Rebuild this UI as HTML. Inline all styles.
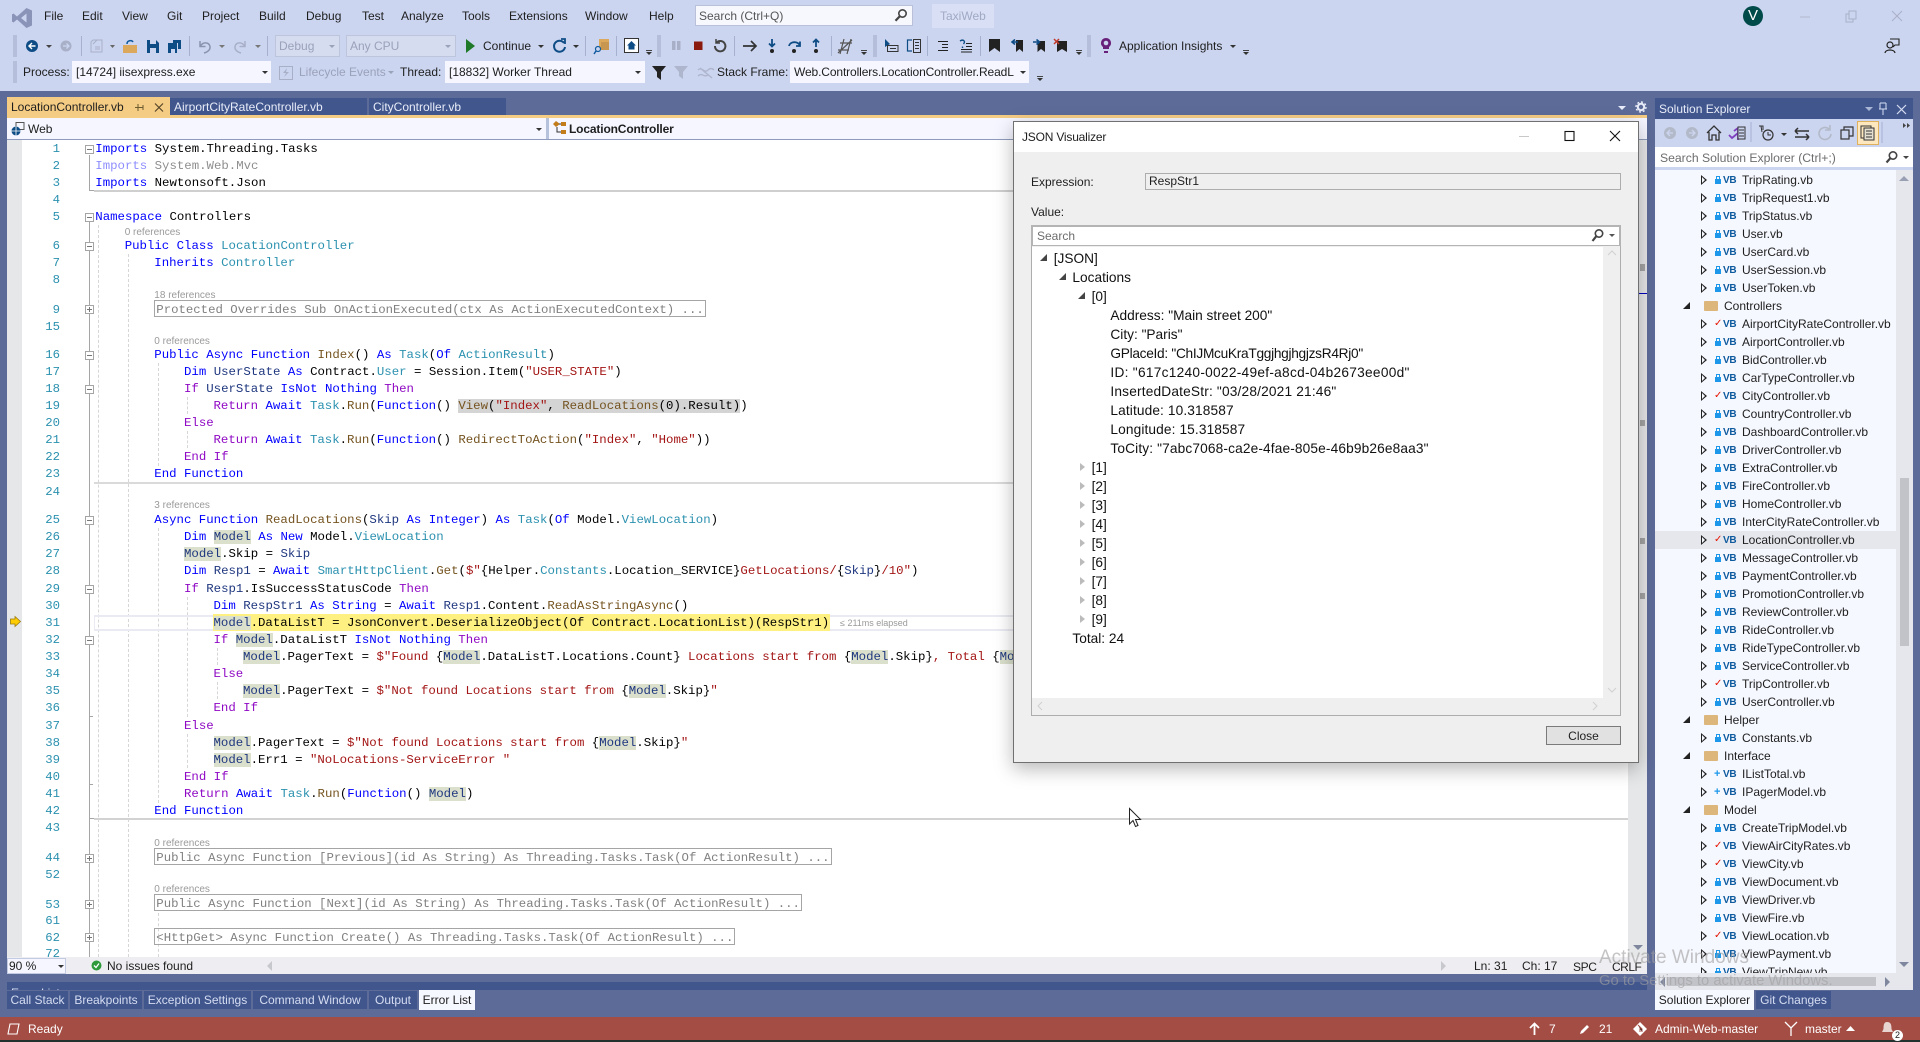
<!DOCTYPE html>
<html><head><meta charset="utf-8"><style>
html,body{margin:0;padding:0;width:1920px;height:1042px;overflow:hidden;background:#5D6B99}
body{font:12px/16px "Liberation Sans",sans-serif;color:#1e1e1e;position:relative}
div,span.a,svg{position:absolute}
svg{overflow:visible}
.u{white-space:nowrap}
.r{position:absolute;left:0;top:1px;width:1920px;height:1041px}
.l{position:absolute;white-space:pre;font:12.37px/17px "Liberation Mono",monospace;color:#000;height:17px}
.n{position:absolute;left:20px;width:40px;text-align:right;font:12.33px/17px "Liberation Mono",monospace;color:#2B91AF}
.k{color:#00f}.c{color:#8F08C4}.t{color:#2B91AF}.s{color:#A31515}.v{color:#1F377F}.m{color:#74531F}
.h{background:#DBE0CC}.g{background:#D4D4D4}
.cl{position:absolute;font:10px/12px "Liberation Sans",sans-serif;color:#9a9a9a;white-space:nowrap}
.box{position:absolute;border:1px solid #A5A5A5;color:#808080;font:12.33px/18px "Liberation Mono",monospace;height:15px;margin-top:-1px;white-space:pre;padding:0 1px;box-sizing:content-box}
.fb{position:absolute;left:85px;width:7px;height:7px;margin-top:1px;border:1px solid #A5A5A5;background:#fff}
.fb:after{content:"";position:absolute;left:1px;top:3px;width:5px;height:1px;background:#777}
.fp:before{content:"";position:absolute;left:3px;top:1px;width:1px;height:5px;background:#777}
.dg{position:absolute;width:0;border-left:1px dashed #d6d6d6}
.mn{position:absolute;top:8px;white-space:nowrap}
.cb{position:absolute;background:#F5F6FF;height:22px;line-height:22px;white-space:nowrap;box-sizing:border-box;padding-left:4px}
.tb{position:absolute;top:991px;height:18px;line-height:18px;background:#40568D;color:#D6DDF2;text-align:center;white-space:nowrap}
.e{position:absolute;height:18px;line-height:18px;white-space:nowrap}
.vb{position:absolute;left:1723px;margin-top:1px;font:bold 10px/18px "Liberation Sans",sans-serif;color:#0E5A9E;letter-spacing:-.3px}
.ar{position:absolute;left:1701px;width:0;height:0;border-left:6px solid #222;border-top:5px solid transparent;border-bottom:5px solid transparent}
.ar:after{content:"";position:absolute;left:-5px;top:-3px;width:0;height:0;border-left:3.5px solid #F6F8FF;border-top:3px solid transparent;border-bottom:3px solid transparent}
.ex{position:absolute;left:1683px;width:0;height:0;border-bottom:7px solid #222;border-left:7px solid transparent}
.lk{position:absolute;left:1715px;width:6px;height:5px;margin-top:-4px;background:#1C97EA}
.lk:before{content:"";position:absolute;left:1px;top:-3px;width:2px;height:2px;border:1px solid #1C97EA;border-bottom:none}
.ck{position:absolute;left:1714px;color:#E51400;font:bold 10px/18px "DejaVu Sans",sans-serif}
.pl{position:absolute;left:1714px;color:#1C97EA;font:bold 11px/18px "Liberation Sans",sans-serif}
.fo{position:absolute;left:1704px;width:14px;height:10px;background:#DCB67A;border-radius:1px}
.j{position:absolute;white-space:nowrap;font:13.7px/19px "Liberation Sans",sans-serif;color:#111;height:19px}
.ja{position:absolute;left:1080px;width:0;height:0;border-left:5px solid #bbb;border-top:4px solid transparent;border-bottom:4px solid transparent}
.jb{position:absolute;width:0;height:0;border-bottom:7px solid #444;border-left:7px solid transparent}
.sp{position:absolute;width:1px;height:20px;background:#A6B0CF;top:36px}
.gr{position:absolute;width:4px;height:22px;background-image:radial-gradient(#7f88a5 .7px,transparent .8px);background-size:2px 2px}
.dd{position:absolute;width:0;height:0;border-top:3px solid #333;border-left:3px solid transparent;border-right:3px solid transparent}
.dc{position:absolute;width:6px;height:1px;background:#444}
</style></head><body>

<!-- top chrome -->
<div style="left:0;top:0;width:1920px;height:91px;background:#CCD5F0"></div>
<svg style="left:11px;top:7px" width="22" height="22" viewBox="0 0 22 22"><path d="M15.5 1L21 3.5V18.5L15.5 21L6 12.5L2.5 15.5L1 14.6V7.4L2.5 6.5L6 9.5ZM15.5 6.5L10 11L15.5 15.5Z" fill="#8A93B8" fill-rule="evenodd"/></svg>
<span class="mn" style="left:44px">File</span><span class="mn" style="left:82px">Edit</span><span class="mn" style="left:122px">View</span><span class="mn" style="left:167px">Git</span><span class="mn" style="left:202px">Project</span><span class="mn" style="left:259px">Build</span><span class="mn" style="left:306px">Debug</span><span class="mn" style="left:362px">Test</span><span class="mn" style="left:401px">Analyze</span><span class="mn" style="left:462px">Tools</span><span class="mn" style="left:509px">Extensions</span><span class="mn" style="left:585px">Window</span><span class="mn" style="left:649px">Help</span>
<div style="left:695px;top:5px;width:218px;height:21px;background:#F7F8FE;border:1px solid #B8C0DA;box-sizing:border-box"></div>
<span class="mn" style="left:699px;color:#555">Search (Ctrl+Q)</span>
<svg style="left:894px;top:8px" width="14" height="14" viewBox="0 0 14 14"><circle cx="8.5" cy="5.5" r="3.7" fill="none" stroke="#444" stroke-width="1.6"/><path d="M5.8 8.2L1.5 12.8" stroke="#444" stroke-width="2.2"/></svg>
<div style="left:932px;top:4px;width:62px;height:24px;background:#D9E0F5"></div>
<span class="mn" style="left:940px;color:#A0A9C4">TaxiWeb</span>
<div style="left:1743px;top:6px;width:20px;height:20px;border-radius:50%;background:#004A4A;color:#fff;text-align:center;font-size:15px;line-height:20px">V</div>
<svg style="left:1795px;top:8px" width="110" height="18"><path d="M5 9H15" stroke="#B2B9CE" stroke-width="1"/><rect x="51" y="6" width="7" height="8" fill="none" stroke="#A9B1C8"/><rect x="54" y="3" width="7" height="8" fill="#CCD5F0" stroke="#A9B1C8"/><path d="M97 3L107 13M107 3L97 13" stroke="#A9B1C8" stroke-width="1.1"/></svg>
<svg style="left:1884px;top:38px" width="17" height="16" viewBox="0 0 17 16"><circle cx="6" cy="7" r="3" fill="none" stroke="#222" stroke-width="1.2"/><path d="M1 15C1.5 11 10.5 11 11 15" fill="none" stroke="#222" stroke-width="1.2"/><path d="M6 1H15V7H11L9 9" fill="none" stroke="#222" stroke-width="1.1"/></svg>

<!-- toolbar row 1 -->
<div class="gr" style="left:13px;top:35px"></div>
<svg style="left:25px;top:39px" width="290" height="15" viewBox="0 0 290 15">
<circle cx="7" cy="7" r="6" fill="#0E4C85"/><path d="M10.5 7H4.5M7 4L4 7L7 10" stroke="#fff" stroke-width="1.4" fill="none"/>
<path d="M21 6h6l-3 3z" fill="#444"/>
<circle cx="41" cy="7" r="5.5" fill="#A8B0C8"/><path d="M38 7H44M41.5 4.5L44 7L41.5 9.5" stroke="#CCD5F0" stroke-width="1.3" fill="none"/>
<path d="M68 1H77V13H66V3Z" fill="none" stroke="#A8B0C8"/><path d="M68 5L72 1M70 8H75M70 10H75" stroke="#A8B0C8"/>
<path d="M85 6h5l-2.5 3z" fill="#666"/>
<path d="M98 6H112V14H98Z" fill="#DCA95C"/><path d="M102 5C102 1 107 1 108 3" stroke="#0E5A9E" stroke-width="1.5" fill="none"/>
<path d="M122 1H131L134 4V14H122ZM125 1V5H131V1ZM125 9V14H131V9Z" fill="#0E4C85" fill-rule="evenodd"/>
<path d="M143 4H152V14H143ZM146 10V14H150V10ZM148 1H156V10H153V4H148Z" fill="#0E4C85" fill-rule="evenodd"/>
<path d="M175 2V7.5H180.5M175.5 7C178 2.5 184 3 185 7.5C185.5 10.5 183 13 179 14" stroke="#8A93AD" stroke-width="1.5" fill="none"/>
<path d="M194 6h6l-3 3z" fill="#777"/>
<path d="M220 2V7.5H214.5M219.5 7C217 2.5 211 3 210 7.5C209.5 10.5 212 13 216 14" stroke="#A8B0C8" stroke-width="1.5" fill="none"/>
<path d="M230 6h6l-3 3z" fill="#777"/>
</svg>
<div class="sp" style="left:81px"></div><div class="sp" style="left:189px"></div><div class="sp" style="left:267px"></div>
<div class="cb" style="left:275px;top:35px;width:65px;background:#D5DCF0;color:#9aa2ba;border:1px solid #BDC5DD;line-height:20px;padding-left:3px">Debug</div><div class="dd" style="left:329px;top:45px;border-top-color:#9aa2ba"></div>
<div class="cb" style="left:346px;top:35px;width:110px;background:#D5DCF0;color:#9aa2ba;border:1px solid #BDC5DD;line-height:20px;padding-left:3px">Any CPU</div><div class="dd" style="left:445px;top:45px;border-top-color:#9aa2ba"></div>
<svg style="left:466px;top:39px" width="10" height="15"><path d="M0 0L9 7L0 14Z" fill="#1E7A28"/></svg>
<span class="mn" style="left:483px;top:38px">Continue</span><div class="dd" style="left:538px;top:45px"></div>
<svg style="left:552px;top:38px" width="16" height="16" viewBox="0 0 16 16"><path d="M12 5A5.5 5.5 0 1 0 13 9" fill="none" stroke="#0E4C85" stroke-width="2"/><path d="M9 1L13 1V6" fill="none" stroke="#0E4C85" stroke-width="1.8"/></svg><div class="dd" style="left:573px;top:45px"></div>
<div class="sp" style="left:585px"></div>
<svg style="left:593px;top:37px" width="18" height="18" viewBox="0 0 18 18"><path d="M6 2H16V12H6Z" fill="#DCA95C"/><path d="M8 5H16V13H8Z" fill="#C79650"/><circle cx="5" cy="12" r="2.5" fill="#CCD5F0" stroke="#0E5A9E" stroke-width="1.2"/><path d="M3 14L1 17" stroke="#0E5A9E" stroke-width="1.5"/></svg>
<div class="sp" style="left:616px"></div>
<svg style="left:624px;top:38px" width="15" height="15" viewBox="0 0 15 15"><rect x=".5" y=".5" width="14" height="14" fill="#fff" stroke="#333"/><path d="M7.5 3L3 7.5H4.5V11.5H10.5V7.5H12Z" fill="#0E4C85"/></svg>
<div class="dc" style="left:646px;top:50px"></div><div class="dd" style="left:646px;top:52px"></div>
<div class="gr" style="left:657px;top:35px"></div>
<svg style="left:640px;top:30px" width="480" height="30" viewBox="0 0 480 30">
<rect x="32" y="11" width="3.5" height="9" fill="#A8B0C8"/><rect x="37" y="11" width="3.5" height="9" fill="#A8B0C8"/>
<rect x="54" y="11.5" width="8.5" height="8.5" fill="#8B1A0E"/>
<path d="M76.5 12.5A5.2 5.2 0 1 1 75 16" fill="none" stroke="#444" stroke-width="2"/><path d="M76 9V13H80" fill="none" stroke="#444" stroke-width="1.5"/>
<path d="M103 16H116M111 11L116 16L111 21" stroke="#333" stroke-width="1.7" fill="none"/>
<path d="M132 9V16M129 13.5L132 16.5L135 13.5" stroke="#0E4C85" stroke-width="1.8" fill="none"/><circle cx="132" cy="21" r="2" fill="#222"/>
<path d="M149 16C150 11 158 11 160 15.5M160 11.5V16H156" stroke="#0E4C85" stroke-width="1.8" fill="none"/><circle cx="154" cy="21" r="2" fill="#222"/>
<path d="M176 17V10M173 12.5L176 9.5L179 12.5" stroke="#0E4C85" stroke-width="1.8" fill="none"/><circle cx="176" cy="21" r="2" fill="#222"/>
<path d="M198 23L212 10M200 13H212M198 20H209M204 9L200 24M211 9L207 24" stroke="#555" stroke-width="1.2" fill="none"/>
<path d="M245 9V17L250 14Z" fill="#0E4C85"/><rect x="247.5" y="15.5" width="10.5" height="6" fill="none" stroke="#333"/><path d="M250 18.5H256" stroke="#333"/>
<path d="M272 10H267.5V21H272" stroke="#0E4C85" stroke-width="1.2" fill="none"/><rect x="273.5" y="9.5" width="7" height="13" fill="none" stroke="#333"/><path d="M275 12.5H279M275 15.5H279M275 18.5H279" stroke="#333"/>
<path d="M298 11.5H308M302 14.5H308M302 17.5H308M298 20.5H308" stroke="#222"/>
<path d="M320 11C323 9 326 11 323.5 14M322.5 16.5V18" stroke="#0E4C85" stroke-width="1.4" fill="none"/><path d="M326 13.5H332M326 16.5H332M321 19.5H332M321 22H332" stroke="#222"/>
<path d="M349 9H360V22L354.5 18L349 22Z" fill="#222"/>
<path d="M376 10H383V22L379.5 19L376 22Z" fill="#222"/><path d="M378 12H372M375 9.5L372 12L375 14.5" stroke="#0E4C85" stroke-width="1.6" fill="none"/>
<path d="M397.5 11H405V22L401 19L397.5 22Z" fill="#222"/><path d="M393 12H399M396.5 9.5L399.5 12L396.5 14.5" stroke="#0E4C85" stroke-width="1.6" fill="none"/>
<path d="M417 11H427V22L422 19L417 22Z" fill="#222"/><path d="M414 9L419 14M419 9L414 14" stroke="#C0392B" stroke-width="1.5"/>
</svg>
<div class="sp" style="left:734px"></div><div class="sp" style="left:831px"></div><div class="sp" style="left:927px"></div><div class="sp" style="left:980px"></div>
<div class="dc" style="left:861px;top:50px"></div><div class="dd" style="left:861px;top:52px"></div>
<div class="gr" style="left:873px;top:35px"></div>
<div class="dc" style="left:1076px;top:50px"></div><div class="dd" style="left:1076px;top:52px"></div>
<div class="gr" style="left:1087px;top:35px"></div>
<svg style="left:1100px;top:37px" width="12" height="18" viewBox="0 0 12 18"><path d="M6 1A5 5 0 0 1 9 10V12H3V10A5 5 0 0 1 6 1ZM4 14H8V16H4Z" fill="#68217A" fill-rule="evenodd"/><circle cx="6" cy="6" r="2.3" fill="#CCD5F0"/></svg>
<span class="mn" style="left:1119px;top:38px">Application Insights</span><div class="dd" style="left:1230px;top:45px"></div>
<div class="dc" style="left:1243px;top:50px"></div><div class="dd" style="left:1243px;top:52px"></div>

<!-- toolbar row 2 -->
<div class="gr" style="left:13px;top:61px"></div>
<span class="mn" style="left:23px;top:64px">Process:</span>
<div class="cb" style="left:72px;top:61px;width:199px">[14724] iisexpress.exe</div><div class="dd" style="left:262px;top:71px"></div>
<svg style="left:279px;top:65px" width="15" height="15"><rect x=".5" y="1.5" width="13" height="13" fill="none" stroke="#A8B0C8"/><path d="M8 3L4 8H7L5 12L10 7H7Z" fill="#A8B0C8"/></svg>
<span class="mn" style="left:299px;top:64px;color:#9AA2BA">Lifecycle Events</span><div class="dd" style="left:388px;top:71px;border-top-color:#9AA2BA"></div>
<span class="mn" style="left:400px;top:64px">Thread:</span>
<div class="cb" style="left:445px;top:61px;width:200px">[18832] Worker Thread</div><div class="dd" style="left:635px;top:71px"></div>
<svg style="left:652px;top:65px" width="68" height="16" viewBox="0 0 68 16"><path d="M0 1H14L9 7V15L5 12V7Z" fill="#222"/><path d="M22 1H36L31 7V14L27 11V7Z" fill="#AEB6CE"/><path d="M46 5C50 1 52 9 56 5C58 3 60 3 62 5M46 11C50 7 52 13 56 10M48 3L60 13" stroke="#AEB6CE" stroke-width="1.4" fill="none"/></svg>
<span class="mn" style="left:717px;top:64px">Stack Frame:</span>
<div class="cb" style="left:790px;top:61px;width:239px;overflow:hidden;letter-spacing:-.12px">Web.Controllers.LocationController.ReadL</div><div class="dd" style="left:1020px;top:71px;border-left-width:3px;z-index:2"></div>
<div class="dc" style="left:1037px;top:76px"></div><div class="dd" style="left:1037px;top:78px"></div>

<!-- doc tabs -->
<div style="left:7px;top:97px;width:163px;height:19px;background:#F5CC84"></div>
<span class="mn" style="left:11px;top:99px">LocationController.vb</span>
<svg style="left:135px;top:102px" width="32" height="11"><path d="M3 2V9M3 5.5H8M8 3V8M0 5.5H3" stroke="#6B5A2E" fill="none"/><path d="M20 1.5L28 9.5M28 1.5L20 9.5" stroke="#55452A" stroke-width="1.2"/></svg>
<div style="left:170px;top:98px;width:197px;height:17px;background:#40568D;color:#E8ECF8;line-height:18px;padding-left:4px;box-sizing:border-box;white-space:nowrap">AirportCityRateController.vb</div>
<div style="left:369px;top:98px;width:137px;height:17px;background:#40568D;color:#E8ECF8;line-height:18px;padding-left:4px;box-sizing:border-box;white-space:nowrap">CityController.vb</div>
<svg style="left:1618px;top:101px" width="30" height="14"><path d="M0 5H8L4 9Z" fill="#E8ECF8"/><circle cx="23" cy="6" r="3.2" fill="none" stroke="#E8ECF8" stroke-width="2"/><circle cx="23" cy="6" r="5" fill="none" stroke="#E8ECF8" stroke-width="1.4" stroke-dasharray="2 1.9"/></svg>
<div style="left:7px;top:115px;width:1640px;height:3px;background:#F5CC84"></div>
<!-- nav -->
<div style="left:7px;top:118px;width:1640px;height:21px;background:#F5F6FF"></div>
<div style="left:7px;top:139px;width:1640px;height:1px;background:#8E9BBC"></div>
<div style="left:546px;top:118px;width:3px;height:21px;background:#B6C1DC"></div>
<svg style="left:11px;top:122px" width="14" height="14" viewBox="0 0 14 14"><rect x="5" y=".5" width="8" height="7" fill="none" stroke="#555"/><circle cx="5" cy="9" r="4.5" fill="#0E4C85"/><path d="M.5 9H9.5M5 4.5V13.5" stroke="#fff" stroke-width=".8"/></svg>
<span class="mn" style="left:28px;top:121px">Web</span><div class="dd" style="left:536px;top:128px"></div>
<svg style="left:552px;top:121px" width="15" height="15" viewBox="0 0 15 15"><path d="M4 0L8 3L4 6L1 3Z" fill="#C27D1A"/><path d="M5 6V11H9M7 3H10" stroke="#333" fill="none"/><path d="M9 1H14V5H9ZM9 9H14V13H9Z" fill="#C27D1A"/></svg>
<span class="mn" style="left:569px;top:121px;font-weight:bold;letter-spacing:-.15px">LocationController</span>

<!-- editor -->
<div id="ed" style="left:7px;top:140px;width:1640px;height:817px;background:#fff;overflow:hidden"></div>
<div style="left:7px;top:140px;width:15px;height:817px;background:#E6E7E8"></div>
<div style="left:1628px;top:140px;width:19px;height:817px;background:#E6E7E8"></div>
<div style="left:1633px;top:945px;width:0;height:0;border-top:5px solid #7F879F;border-left:5px solid transparent;border-right:5px solid transparent"></div>
<div style="left:1640px;top:264px;width:5px;height:7px;background:#A5A5A5"></div>
<div style="left:1640px;top:420px;width:5px;height:6px;background:#A5A5A5"></div>
<div style="left:1640px;top:538px;width:5px;height:6px;background:#A5A5A5"></div>
<div style="left:1640px;top:593px;width:5px;height:6px;background:#A5A5A5"></div>
<div style="left:1628px;top:293px;width:19px;height:1px;background:#0000C0"></div>

<!-- separators -->
<div style="left:94px;top:189.5px;width:1534px;height:2px;background:#CFCFCF"></div>
<div style="left:94px;top:482px;width:1534px;height:2px;background:#DADADA"></div>
<div style="left:94px;top:818px;width:1534px;height:2px;background:#D2D2D2"></div>
<div style="left:89px;top:155px;width:1px;height:35px;background:#A5A5A5"></div><div style="left:89px;top:190px;width:5px;height:1px;background:#A5A5A5"></div>
<div style="left:89px;top:222px;width:1px;height:735px;background:#A5A5A5"></div>
<div style="left:89px;top:716px;width:4px;height:1px;background:#A5A5A5"></div><div style="left:89px;top:784px;width:4px;height:1px;background:#A5A5A5"></div><div style="left:89px;top:818px;width:5px;height:1px;background:#A5A5A5"></div>
<div class="dg" style="left:98px;top:225px;height:732px"></div>
<div class="dg" style="left:128px;top:254px;height:703px"></div>
<div class="dg" style="left:158px;top:363px;height:103px"></div><div class="dg" style="left:158px;top:528px;height:280px"></div><div class="dg" style="left:158px;top:913px;height:44px"></div>
<div class="dg" style="left:187px;top:397px;height:17px"></div><div class="dg" style="left:187px;top:431px;height:17px"></div><div class="dg" style="left:187px;top:597px;height:120px"></div><div class="dg" style="left:187px;top:734px;height:34px"></div>
<div class="dg" style="left:217px;top:648px;height:17px"></div><div class="dg" style="left:217px;top:682px;height:17px"></div>
<!-- current line & highlight -->
<div style="left:94px;top:614.5px;width:1534px;height:16px;border:1px solid #EAEAF2;border-width:2px 1px;box-sizing:border-box"></div>
<div style="left:213px;top:614px;width:617px;height:17px;background:#FFF181"></div>

<!-- fold boxes -->
<div class="fb" style="top:144px"></div><div class="fb" style="top:212px"></div><div class="fb" style="top:241px"></div><div class="fb fp" style="top:304px"></div><div class="fb" style="top:350px"></div><div class="fb" style="top:384px"></div><div class="fb" style="top:515px"></div><div class="fb" style="top:584px"></div><div class="fb" style="top:635px"></div><div class="fb fp" style="top:853px"></div><div class="fb fp" style="top:899px"></div><div class="fb fp" style="top:932px"></div>

<!-- breakpoint arrow -->
<svg style="left:10px;top:616px" width="11" height="11"><path d="M.5 3H5V.5L10.5 5.5L5 10.5V8H.5Z" fill="#FFCC00" stroke="#9A7B10" stroke-width=".8"/></svg>

<!-- line numbers -->
<div class="r">
<div class="n" style="top:139.5px">1</div><div class="n" style="top:156.5px">2</div><div class="n" style="top:174px">3</div><div class="n" style="top:191px">4</div><div class="n" style="top:208px">5</div><div class="n" style="top:236.5px">6</div><div class="n" style="top:254px">7</div><div class="n" style="top:271px">8</div><div class="n" style="top:300.5px">9</div><div class="n" style="top:317.5px">15</div><div class="n" style="top:346px">16</div><div class="n" style="top:363px">17</div><div class="n" style="top:380px">18</div><div class="n" style="top:397px">19</div><div class="n" style="top:414px">20</div><div class="n" style="top:431px">21</div><div class="n" style="top:448px">22</div><div class="n" style="top:465px">23</div><div class="n" style="top:482.5px">24</div><div class="n" style="top:510.5px">25</div><div class="n" style="top:527.5px">26</div><div class="n" style="top:545px">27</div><div class="n" style="top:562px">28</div><div class="n" style="top:579.5px">29</div><div class="n" style="top:596.5px">30</div><div class="n" style="top:614px">31</div><div class="n" style="top:631px">32</div><div class="n" style="top:648px">33</div><div class="n" style="top:665px">34</div><div class="n" style="top:682px">35</div><div class="n" style="top:699px">36</div><div class="n" style="top:716.5px">37</div><div class="n" style="top:733.5px">38</div><div class="n" style="top:751px">39</div><div class="n" style="top:768px">40</div><div class="n" style="top:785px">41</div><div class="n" style="top:802px">42</div><div class="n" style="top:819px">43</div><div class="n" style="top:848.5px">44</div><div class="n" style="top:866px">52</div><div class="n" style="top:895.5px">53</div><div class="n" style="top:912px">61</div><div class="n" style="top:928.5px">62</div><div class="n" style="top:945px;height:11px;overflow:hidden">72</div>
</div>

<!-- code -->
<div class="r">
<div class="l" style="left:95.3px;top:139.5px"><span class="k">Imports</span> System.Threading.Tasks</div>
<div class="l" style="left:95.3px;top:156.5px;opacity:.45"><span class="k">Imports</span> System.Web.Mvc</div>
<div class="l" style="left:95.3px;top:174px"><span class="k">Imports</span> Newtonsoft.Json</div>
<div class="l" style="left:95.3px;top:208px"><span class="k">Namespace</span> Controllers</div>
<div class="cl" style="left:124.7px;top:226px">0 references</div>
<div class="l" style="left:124.7px;top:236.5px"><span class="k">Public Class</span> <span class="t">LocationController</span></div>
<div class="l" style="left:154.3px;top:254px"><span class="k">Inherits</span> <span class="t">Controller</span></div>
<div class="cl" style="left:154.3px;top:289px">18 references</div>
<div class="box" style="left:154.3px;top:300px">Protected Overrides Sub OnActionExecuted(ctx As ActionExecutedContext) ...</div>
<div class="cl" style="left:154.3px;top:335px">0 references</div>
<div class="l" style="left:154.3px;top:346px"><span class="k">Public Async Function</span> <span class="m">Index</span>() <span class="k">As</span> <span class="t">Task</span>(<span class="k">Of</span> <span class="t">ActionResult</span>)</div>
<div class="l" style="left:184px;top:363px"><span class="k">Dim</span> <span class="v">UserState</span> <span class="k">As</span> Contract.<span class="t">User</span> = Session.Item(<span class="s">"USER_STATE"</span>)</div>
<div class="l" style="left:184px;top:380px"><span class="c">If</span> <span class="v">UserState</span> <span class="k">IsNot Nothing</span> <span class="c">Then</span></div>
<div class="l" style="left:213.5px;top:397px"><span class="c">Return</span> <span class="k">Await</span> <span class="t">Task</span>.<span class="m">Run</span>(<span class="k">Function</span>() <span class="g"><span class="m">View</span>(<span class="s">"Index"</span>, <span class="m">ReadLocations</span>(0).Result)</span>)</div>
<div class="l" style="left:184px;top:414px"><span class="c">Else</span></div>
<div class="l" style="left:213.5px;top:431px"><span class="c">Return</span> <span class="k">Await</span> <span class="t">Task</span>.<span class="m">Run</span>(<span class="k">Function</span>() <span class="m">RedirectToAction</span>(<span class="s">"Index"</span>, <span class="s">"Home"</span>))</div>
<div class="l" style="left:184px;top:448px"><span class="c">End If</span></div>
<div class="l" style="left:154.3px;top:465px"><span class="k">End Function</span></div>
<div class="cl" style="left:154.3px;top:499px">3 references</div>
<div class="l" style="left:154.3px;top:510.5px"><span class="k">Async Function</span> <span class="m">ReadLocations</span>(<span class="v">Skip</span> <span class="k">As Integer</span>) <span class="k">As</span> <span class="t">Task</span>(<span class="k">Of</span> Model.<span class="t">ViewLocation</span>)</div>
<div class="l" style="left:184px;top:527.5px"><span class="k">Dim</span> <span class="v h">Model</span> <span class="k">As New</span> Model.<span class="t">ViewLocation</span></div>
<div class="l" style="left:184px;top:545px"><span class="v h">Model</span>.Skip = <span class="v">Skip</span></div>
<div class="l" style="left:184px;top:562px"><span class="k">Dim</span> <span class="v">Resp1</span> = <span class="k">Await</span> <span class="t">SmartHttpClient</span>.<span class="m">Get</span>(<span class="s">$"</span>{Helper.<span class="t">Constants</span>.Location_SERVICE}<span class="s">GetLocations/</span>{<span class="v">Skip</span>}<span class="s">/10"</span>)</div>
<div class="l" style="left:184px;top:579.5px"><span class="c">If</span> <span class="v">Resp1</span>.IsSuccessStatusCode <span class="c">Then</span></div>
<div class="l" style="left:213.5px;top:596.5px"><span class="k">Dim</span> <span class="v">RespStr1</span> <span class="k">As String</span> = <span class="k">Await</span> <span class="v">Resp1</span>.Content.<span class="m">ReadAsStringAsync</span>()</div>
<div class="l" style="left:213.5px;top:614px"><span class="v h">Model</span>.DataListT = JsonConvert.DeserializeObject(Of Contract.LocationList)(RespStr1)</div>
<div class="l" style="left:213.5px;top:631px"><span class="c">If</span> <span class="v h">Model</span>.DataListT <span class="k">IsNot Nothing</span> <span class="c">Then</span></div>
<div class="l" style="left:243px;top:648px"><span class="v h">Model</span>.PagerText = <span class="s">$"Found </span>{<span class="v h">Model</span>.DataListT.Locations.Count}<span class="s"> Locations start from </span>{<span class="v h">Model</span>.Skip}<span class="s">, Total </span>{<span class="v h">Model</span>.DataListT.Total}<span class="s">"</span></div>
<div class="l" style="left:213.5px;top:665px"><span class="c">Else</span></div>
<div class="l" style="left:243px;top:682px"><span class="v h">Model</span>.PagerText = <span class="s">$"Not found Locations start from </span>{<span class="v h">Model</span>.Skip}<span class="s">"</span></div>
<div class="l" style="left:213.5px;top:699px"><span class="c">End If</span></div>
<div class="l" style="left:184px;top:716.5px"><span class="c">Else</span></div>
<div class="l" style="left:213.5px;top:733.5px"><span class="v h">Model</span>.PagerText = <span class="s">$"Not found Locations start from </span>{<span class="v h">Model</span>.Skip}<span class="s">"</span></div>
<div class="l" style="left:213.5px;top:751px"><span class="v h">Model</span>.Err1 = <span class="s">"NoLocations-ServiceError "</span></div>
<div class="l" style="left:184px;top:768px"><span class="c">End If</span></div>
<div class="l" style="left:184px;top:785px"><span class="c">Return</span> <span class="k">Await</span> <span class="t">Task</span>.<span class="m">Run</span>(<span class="k">Function</span>() <span class="v h">Model</span>)</div>
<div class="l" style="left:154.3px;top:802px"><span class="k">End Function</span></div>
<div class="cl" style="left:154.3px;top:837px">0 references</div>
<div class="box" style="left:154.3px;top:848px">Public Async Function [Previous](id As String) As Threading.Tasks.Task(Of ActionResult) ...</div>
<div class="cl" style="left:154.3px;top:883px">0 references</div>
<div class="box" style="left:154.3px;top:894px">Public Async Function [Next](id As String) As Threading.Tasks.Task(Of ActionResult) ...</div>
<div class="box" style="left:154.3px;top:928px">&lt;HttpGet&gt; Async Function Create() As Threading.Tasks.Task(Of ActionResult) ...</div>
<div class="cl" style="left:840px;top:616px;font-size:9px">≤ 211ms elapsed</div>
</div>

<!-- editor status -->
<div style="left:7px;top:957px;width:1640px;height:17px;background:#EEEEF2"></div>
<div style="left:7px;top:958px;width:59px;height:16px;background:#F5F6FF;border:1px solid #C2CBE2;box-sizing:border-box"></div>
<span class="mn" style="left:9px;top:958px">90 %</span><div class="dd" style="left:58px;top:965px"></div>
<svg style="left:91px;top:960px" width="11" height="11"><circle cx="5.5" cy="5.5" r="5" fill="#2E9A3C"/><path d="M3 5.5L5 7.5L8 3.5" stroke="#fff" stroke-width="1.3" fill="none"/></svg>
<span class="mn" style="left:107px;top:958px">No issues found</span>
<div style="left:267px;top:961px;width:0;height:0;border-right:5px solid #C7C8CE;border-top:5px solid transparent;border-bottom:5px solid transparent"></div>
<div style="left:1441px;top:961px;width:0;height:0;border-left:5px solid #C7C8CE;border-top:5px solid transparent;border-bottom:5px solid transparent"></div>
<span class="mn" style="left:1474px;top:958px">Ln: 31</span><span class="mn" style="left:1522px;top:958px">Ch: 17</span><span class="mn" style="left:1573px;top:959px;letter-spacing:-.4px">SPC</span><span class="mn" style="left:1612px;top:959px;letter-spacing:-.5px">CRLF</span>

<!-- bottom panel -->
<div style="left:7px;top:982px;width:1640px;height:8px;background:#40568D;overflow:hidden"><span style="position:absolute;left:4px;top:3px;color:#D6DDF2;font-size:12px;white-space:nowrap">Error List</span></div>
<div class="tb" style="left:7px;width:61px">Call Stack</div><div class="tb" style="left:70px;width:72px">Breakpoints</div><div class="tb" style="left:144px;width:107px">Exception Settings</div><div class="tb" style="left:253px;width:114px">Command Window</div><div class="tb" style="left:369px;width:48px">Output</div><div class="tb" style="left:419px;top:990px;height:20px;line-height:20px;width:56px;background:#F6F8FF;color:#1e1e1e">Error List</div>

<!-- Solution explorer -->
<div style="left:1655px;top:98px;width:258px;height:21px;background:#40568D;color:#E8ECF8;line-height:22px;padding-left:4px;box-sizing:border-box">Solution Explorer</div>
<svg style="left:1864px;top:103px" width="46" height="13"><path d="M1 4H9L5 8Z" fill="#AAB6D6"/><path d="M16 0V6M22 0V6M15 6H23M19 6V12M16 0H22" stroke="#D6DDF2" fill="none"/><path d="M33 2L42 11M42 2L33 11" stroke="#D6DDF2" stroke-width="1.2"/></svg>
<div style="left:1655px;top:119px;width:258px;height:28px;background:#CCD5F0"></div>
<svg style="left:1663px;top:124px" width="250" height="22" viewBox="0 0 250 22">
<circle cx="7" cy="9" r="6" fill="#B2BAC9"/><path d="M10 9H4.5M7 6L4 9L7 12" stroke="#CCD5F0" stroke-width="1.3" fill="none"/>
<circle cx="29" cy="9" r="6" fill="#B2BAC9"/><path d="M26 9H31.5M29 6L32 9L29 12" stroke="#CCD5F0" stroke-width="1.3" fill="none"/>
<path d="M44 9L51 2L58 9M46 8V16H49V11H53V16H56V8" stroke="#333" stroke-width="1.3" fill="none"/>
<path d="M66 11L69 14L75 9M71 7L75 4V16" stroke="#7F3FBF" stroke-width="1.8" fill="none"/><rect x="75" y="3" width="7" height="12" fill="#CCD5F0" stroke="#333"/><path d="M76 6H81M76 9H81M76 12H81" stroke="#333"/>
<path d="M88 -2V18" stroke="#A6B0CF"/>
<circle cx="105" cy="11" r="5" fill="none" stroke="#333" stroke-width="1.2"/><path d="M105 8V11H108M96 2H100V6M98 2L99 8" stroke="#333" fill="none"/>
<path d="M118 9h6l-3 3z" fill="#333"/>
<path d="M132 7H146M132 7L135 4M132 7L135 10M146 13H132M146 13L143 10M146 13L143 16" stroke="#333" stroke-width="1.5" fill="none"/>
<path d="M166 5A6 6 0 1 0 168 10M167 1V6H162" stroke="#B2BAC9" stroke-width="1.6" fill="none"/>
<rect x="178" y="6" width="8" height="9" fill="none" stroke="#333" stroke-width="1.2"/><path d="M181 6V3H190V12H186" fill="none" stroke="#333" stroke-width="1.2"/>
<path d="M219 -2V19" stroke="#A6B0CF"/>
</svg>
<div style="left:1857px;top:121px;width:22px;height:24px;background:#FDE7BE;border:1px solid #E0B15C;box-sizing:border-box"></div>
<svg style="left:1860px;top:125px" width="16" height="16" viewBox="0 0 16 16"><rect x="1" y="1" width="10" height="12" fill="none" stroke="#333"/><rect x="4" y="3" width="10" height="12" fill="#E6E0D0" stroke="#333"/><path d="M6 6H12M6 9H12M6 12H12" stroke="#333"/></svg>
<svg style="left:1903px;top:122px" width="9" height="7"><path d="M0 1L3 3.5L0 6ZM4 1L7 3.5L4 6Z" fill="#444"/></svg>
<div style="left:1655px;top:147px;width:258px;height:20px;background:#fff"></div>
<span class="mn" style="left:1660px;top:150px;color:#6D6D6D;font-size:12.2px">Search Solution Explorer (Ctrl+;)</span>
<svg style="left:1885px;top:150px" width="26" height="14"><circle cx="8" cy="5.5" r="3.7" fill="none" stroke="#444" stroke-width="1.6"/><path d="M5.3 8.2L1.5 12.5" stroke="#444" stroke-width="2.2"/><path d="M18 6h6l-3 3z" fill="#444"/></svg>
<div style="left:1655px;top:167px;width:258px;height:3px;background:#CCD5F0"></div>
<div style="left:1655px;top:170px;width:241px;height:803px;background:#F6F8FF"></div>
<div style="left:1896px;top:170px;width:17px;height:803px;background:#E6E7ED"></div>
<div style="left:1899px;top:176px;width:0;height:0;border-bottom:5px solid #9AA0B4;border-left:5px solid transparent;border-right:5px solid transparent"></div>
<div style="left:1900px;top:478px;width:9px;height:168px;background:#C2C3C9"></div>
<div style="left:1899px;top:962px;width:0;height:0;border-top:5px solid #7F879F;border-left:5px solid transparent;border-right:5px solid transparent"></div>
<div style="left:1655px;top:531px;width:241px;height:18px;background:#E6E7ED"></div>
<div style="left:1655px;top:973px;width:258px;height:17px;background:#E6E7ED"></div>
<div style="left:1667px;top:977px;width:209px;height:9px;background:#C2C3C9"></div>
<div style="left:1660px;top:977px;width:0;height:0;border-right:5px solid #7F879F;border-top:5px solid transparent;border-bottom:5px solid transparent"></div>
<div style="left:1885px;top:977px;width:0;height:0;border-left:5px solid #7F879F;border-top:5px solid transparent;border-bottom:5px solid transparent"></div>
<div style="left:1655px;top:990px;width:99px;height:20px;background:#F6F8FF;text-align:center;line-height:20px">Solution Explorer</div>
<div class="tb" style="left:1756px;width:75px">Git Changes</div>

<div style="left:1655px;top:170px;width:258px;height:803px;overflow:hidden">
<div style="left:-1655px;top:-170px;width:1920px;height:1042px">
<i class="ar" style="top:175px"></i><i class="lk" style="top:183px"></i><b class="vb" style="top:171px">VB</b><div class="e" style="left:1742px;top:171px">TripRating.vb</div>
<i class="ar" style="top:193px"></i><i class="lk" style="top:201px"></i><b class="vb" style="top:189px">VB</b><div class="e" style="left:1742px;top:189px">TripRequest1.vb</div>
<i class="ar" style="top:211px"></i><i class="lk" style="top:219px"></i><b class="vb" style="top:207px">VB</b><div class="e" style="left:1742px;top:207px">TripStatus.vb</div>
<i class="ar" style="top:229px"></i><i class="lk" style="top:237px"></i><b class="vb" style="top:225px">VB</b><div class="e" style="left:1742px;top:225px">User.vb</div>
<i class="ar" style="top:247px"></i><i class="lk" style="top:255px"></i><b class="vb" style="top:243px">VB</b><div class="e" style="left:1742px;top:243px">UserCard.vb</div>
<i class="ar" style="top:265px"></i><i class="lk" style="top:273px"></i><b class="vb" style="top:261px">VB</b><div class="e" style="left:1742px;top:261px">UserSession.vb</div>
<i class="ar" style="top:283px"></i><i class="lk" style="top:291px"></i><b class="vb" style="top:279px">VB</b><div class="e" style="left:1742px;top:279px">UserToken.vb</div>
<i class="ex" style="top:302px"></i><i class="fo" style="top:301px"></i><div class="e" style="left:1724px;top:297px">Controllers</div>
<i class="ar" style="top:319px"></i><i class="ck" style="top:315px">✓</i><b class="vb" style="top:315px">VB</b><div class="e" style="left:1742px;top:315px">AirportCityRateController.vb</div>
<i class="ar" style="top:337px"></i><i class="lk" style="top:345px"></i><b class="vb" style="top:333px">VB</b><div class="e" style="left:1742px;top:333px">AirportController.vb</div>
<i class="ar" style="top:355px"></i><i class="lk" style="top:363px"></i><b class="vb" style="top:351px">VB</b><div class="e" style="left:1742px;top:351px">BidController.vb</div>
<i class="ar" style="top:373px"></i><i class="lk" style="top:381px"></i><b class="vb" style="top:369px">VB</b><div class="e" style="left:1742px;top:369px">CarTypeController.vb</div>
<i class="ar" style="top:391px"></i><i class="ck" style="top:387px">✓</i><b class="vb" style="top:387px">VB</b><div class="e" style="left:1742px;top:387px">CityController.vb</div>
<i class="ar" style="top:409px"></i><i class="lk" style="top:417px"></i><b class="vb" style="top:405px">VB</b><div class="e" style="left:1742px;top:405px">CountryController.vb</div>
<i class="ar" style="top:427px"></i><i class="lk" style="top:435px"></i><b class="vb" style="top:423px">VB</b><div class="e" style="left:1742px;top:423px">DashboardController.vb</div>
<i class="ar" style="top:445px"></i><i class="lk" style="top:453px"></i><b class="vb" style="top:441px">VB</b><div class="e" style="left:1742px;top:441px">DriverController.vb</div>
<i class="ar" style="top:463px"></i><i class="lk" style="top:471px"></i><b class="vb" style="top:459px">VB</b><div class="e" style="left:1742px;top:459px">ExtraController.vb</div>
<i class="ar" style="top:481px"></i><i class="lk" style="top:489px"></i><b class="vb" style="top:477px">VB</b><div class="e" style="left:1742px;top:477px">FireController.vb</div>
<i class="ar" style="top:499px"></i><i class="lk" style="top:507px"></i><b class="vb" style="top:495px">VB</b><div class="e" style="left:1742px;top:495px">HomeController.vb</div>
<i class="ar" style="top:517px"></i><i class="lk" style="top:525px"></i><b class="vb" style="top:513px">VB</b><div class="e" style="left:1742px;top:513px">InterCityRateController.vb</div>
<i class="ar" style="top:535px"></i><i class="ck" style="top:531px">✓</i><b class="vb" style="top:531px">VB</b><div class="e" style="left:1742px;top:531px">LocationController.vb</div>
<i class="ar" style="top:553px"></i><i class="lk" style="top:561px"></i><b class="vb" style="top:549px">VB</b><div class="e" style="left:1742px;top:549px">MessageController.vb</div>
<i class="ar" style="top:571px"></i><i class="lk" style="top:579px"></i><b class="vb" style="top:567px">VB</b><div class="e" style="left:1742px;top:567px">PaymentController.vb</div>
<i class="ar" style="top:589px"></i><i class="lk" style="top:597px"></i><b class="vb" style="top:585px">VB</b><div class="e" style="left:1742px;top:585px">PromotionController.vb</div>
<i class="ar" style="top:607px"></i><i class="lk" style="top:615px"></i><b class="vb" style="top:603px">VB</b><div class="e" style="left:1742px;top:603px">ReviewController.vb</div>
<i class="ar" style="top:625px"></i><i class="lk" style="top:633px"></i><b class="vb" style="top:621px">VB</b><div class="e" style="left:1742px;top:621px">RideController.vb</div>
<i class="ar" style="top:643px"></i><i class="lk" style="top:651px"></i><b class="vb" style="top:639px">VB</b><div class="e" style="left:1742px;top:639px">RideTypeController.vb</div>
<i class="ar" style="top:661px"></i><i class="lk" style="top:669px"></i><b class="vb" style="top:657px">VB</b><div class="e" style="left:1742px;top:657px">ServiceController.vb</div>
<i class="ar" style="top:679px"></i><i class="ck" style="top:675px">✓</i><b class="vb" style="top:675px">VB</b><div class="e" style="left:1742px;top:675px">TripController.vb</div>
<i class="ar" style="top:697px"></i><i class="lk" style="top:705px"></i><b class="vb" style="top:693px">VB</b><div class="e" style="left:1742px;top:693px">UserController.vb</div>
<i class="ex" style="top:716px"></i><i class="fo" style="top:715px"></i><div class="e" style="left:1724px;top:711px">Helper</div>
<i class="ar" style="top:733px"></i><i class="lk" style="top:741px"></i><b class="vb" style="top:729px">VB</b><div class="e" style="left:1742px;top:729px">Constants.vb</div>
<i class="ex" style="top:752px"></i><i class="fo" style="top:751px"></i><div class="e" style="left:1724px;top:747px">Interface</div>
<i class="ar" style="top:769px"></i><i class="pl" style="top:765px">+</i><b class="vb" style="top:765px">VB</b><div class="e" style="left:1742px;top:765px">IListTotal.vb</div>
<i class="ar" style="top:787px"></i><i class="pl" style="top:783px">+</i><b class="vb" style="top:783px">VB</b><div class="e" style="left:1742px;top:783px">IPagerModel.vb</div>
<i class="ex" style="top:806px"></i><i class="fo" style="top:805px"></i><div class="e" style="left:1724px;top:801px">Model</div>
<i class="ar" style="top:823px"></i><i class="lk" style="top:831px"></i><b class="vb" style="top:819px">VB</b><div class="e" style="left:1742px;top:819px">CreateTripModel.vb</div>
<i class="ar" style="top:841px"></i><i class="ck" style="top:837px">✓</i><b class="vb" style="top:837px">VB</b><div class="e" style="left:1742px;top:837px">ViewAirCityRates.vb</div>
<i class="ar" style="top:859px"></i><i class="ck" style="top:855px">✓</i><b class="vb" style="top:855px">VB</b><div class="e" style="left:1742px;top:855px">ViewCity.vb</div>
<i class="ar" style="top:877px"></i><i class="lk" style="top:885px"></i><b class="vb" style="top:873px">VB</b><div class="e" style="left:1742px;top:873px">ViewDocument.vb</div>
<i class="ar" style="top:895px"></i><i class="lk" style="top:903px"></i><b class="vb" style="top:891px">VB</b><div class="e" style="left:1742px;top:891px">ViewDriver.vb</div>
<i class="ar" style="top:913px"></i><i class="lk" style="top:921px"></i><b class="vb" style="top:909px">VB</b><div class="e" style="left:1742px;top:909px">ViewFire.vb</div>
<i class="ar" style="top:931px"></i><i class="ck" style="top:927px">✓</i><b class="vb" style="top:927px">VB</b><div class="e" style="left:1742px;top:927px">ViewLocation.vb</div>
<i class="ar" style="top:949px"></i><i class="lk" style="top:957px"></i><b class="vb" style="top:945px">VB</b><div class="e" style="left:1742px;top:945px">ViewPayment.vb</div>
<i class="ar" style="top:967px"></i><i class="lk" style="top:975px"></i><b class="vb" style="top:963px">VB</b><div class="e" style="left:1742px;top:963px">ViewTripNew.vb</div>
</div></div>

<!-- watermark -->
<div class="u" style="left:1599px;top:946px;font-size:19px;line-height:24px;color:rgba(160,160,160,.62)">Activate Windows</div>
<div class="u" style="left:1599px;top:972px;font-size:14.8px;line-height:18px;color:rgba(160,160,160,.62)">Go to Settings to activate Windows.</div>

<!-- status bar -->
<div style="left:0;top:1017px;width:1920px;height:23px;background:#A34D44"></div>
<div style="left:0;top:1040px;width:1920px;height:2px;background:#22302E"></div>
<svg style="left:7px;top:1023px" width="13" height="12"><path d="M3 1H12L10 11H1Z" fill="none" stroke="#fff" stroke-width="1.1"/></svg>
<span class="mn" style="left:28px;top:1021px;color:#fff">Ready</span>
<svg style="left:1529px;top:1022px" width="12" height="14"><path d="M5.5 13V2M1 6L5.5 1.5L10 6" stroke="#fff" stroke-width="1.8" fill="none"/></svg>
<span class="mn" style="left:1549px;top:1021px;color:#fff">7</span>
<svg style="left:1579px;top:1023px" width="12" height="12"><path d="M1 11L2 8L8 2L10 4L4 10Z" fill="#fff"/></svg>
<span class="mn" style="left:1599px;top:1021px;color:#fff">21</span>
<svg style="left:1633px;top:1022px" width="14" height="14"><path d="M7 0L14 7L7 14L0 7Z" fill="#fff"/><path d="M5 3L9 7V10M7 6V10" stroke="#A34D44"/></svg>
<span class="mn" style="left:1655px;top:1021px;color:#fff">Admin-Web-master</span>
<svg style="left:1784px;top:1021px" width="14" height="16"><path d="M1 1L7 7L13 1M7 7V15" stroke="#fff" stroke-width="1.3" fill="none"/></svg>
<span class="mn" style="left:1805px;top:1021px;color:#fff">master</span>
<svg style="left:1846px;top:1026px" width="9" height="5"><path d="M0 5L4.5 0L9 5Z" fill="#fff"/></svg>
<svg style="left:1881px;top:1021px" width="16" height="16"><path d="M6 1C10 1 10.5 4 10.5 8L12 11H1L2.5 8C2.5 4 3 1 6 1Z" fill="#E8D5D2"/></svg>
<div style="left:1892px;top:1030px;width:11px;height:11px;border-radius:50%;background:#fff;color:#222;font-size:9px;line-height:11px;text-align:center">2</div>

<!-- dialog -->
<div style="left:1013px;top:121px;width:626px;height:642px;background:#EFEFEF;border:1px solid #707070;box-sizing:border-box;box-shadow:0 6px 18px rgba(0,0,0,.28)"></div>
<div style="left:1014px;top:122px;width:624px;height:30px;background:#fff"></div>
<span class="mn" style="left:1022px;top:129px;letter-spacing:-.2px">JSON Visualizer</span>
<svg style="left:1518px;top:129px" width="104" height="15"><path d="M1 7.5H11" stroke="#C8C8C8"/><rect x="47" y="2.5" width="9" height="9" fill="none" stroke="#111" stroke-width="1.1"/><path d="M92 2L102 12M102 2L92 12" stroke="#111" stroke-width="1.1"/></svg>
<span class="mn" style="left:1031px;top:174px">Expression:</span>
<div style="left:1145px;top:173px;width:476px;height:17px;border:1px solid #ADADAD;box-sizing:border-box;background:#EFEFEF;padding-left:3px;line-height:15px">RespStr1</div>
<span class="mn" style="left:1031px;top:204px">Value:</span>
<div style="left:1031px;top:225px;width:590px;height:22px;background:#fff;border:2px solid #B4B4B4;box-sizing:border-box;padding-left:4px;line-height:18px;color:#6D6D6D">Search</div>
<svg style="left:1591px;top:228px" width="27" height="15"><circle cx="8" cy="5.5" r="3.7" fill="none" stroke="#444" stroke-width="1.6"/><path d="M5.3 8.2L1.5 13" stroke="#444" stroke-width="2.2"/><path d="M18 6h6l-3 3z" fill="#555"/></svg>
<div style="left:1031px;top:246px;width:590px;height:470px;border:1px solid #ADADAD;border-top:none;box-sizing:border-box;background:#EFEFEF"></div>
<div style="left:1032px;top:247px;width:571px;height:451px;background:#fff"></div>
<svg style="left:1607px;top:250px" width="10" height="6"><path d="M1 5L5 1L9 5" stroke="#D0D0D0" fill="none"/></svg>
<svg style="left:1607px;top:687px" width="10" height="6"><path d="M1 1L5 5L9 1" stroke="#D0D0D0" fill="none"/></svg>
<svg style="left:1037px;top:701px" width="6" height="10"><path d="M5 1L1 5L5 9" stroke="#D0D0D0" fill="none"/></svg>
<svg style="left:1592px;top:701px" width="6" height="10"><path d="M1 1L5 5L1 9" stroke="#D0D0D0" fill="none"/></svg>
<i class="jb" style="left:1040px;top:254px"></i><div class="j" style="left:1053.7px;top:248.5px">[JSON]</div>
<i class="jb" style="left:1059px;top:273px"></i><div class="j" style="left:1072.4px;top:267.5px">Locations</div>
<i class="jb" style="left:1078px;top:292px"></i><div class="j" style="left:1091.6px;top:286.5px">[0]</div>
<div class="j" style="left:1110.4px;top:305.5px">Address: "Main street 200"</div>
<div class="j" style="left:1110.4px;top:324.5px">City: "Paris"</div>
<div class="j" style="left:1110.4px;top:343.5px;letter-spacing:-.29px">GPlaceId: "ChIJMcuKraTggjhgjhgjzsR4Rj0"</div>
<div class="j" style="left:1110.4px;top:362.5px;letter-spacing:.28px">ID: "617c1240-0022-49ef-a8cd-04b2673ee00d"</div>
<div class="j" style="left:1110.4px;top:381.5px;letter-spacing:.18px">InsertedDateStr: "03/28/2021 21:46"</div>
<div class="j" style="left:1110.4px;top:400.5px;letter-spacing:.12px">Latitude: 10.318587</div>
<div class="j" style="left:1110.4px;top:419.5px;letter-spacing:.12px">Longitude: 15.318587</div>
<div class="j" style="left:1110.4px;top:438.5px;letter-spacing:.14px">ToCity: "7abc7068-ca2e-4fae-805e-46b9b26e8aa3"</div>
<i class="ja" style="top:463px"></i><div class="j" style="left:1091.6px;top:457.5px">[1]</div>
<i class="ja" style="top:482px"></i><div class="j" style="left:1091.6px;top:476.5px">[2]</div>
<i class="ja" style="top:501px"></i><div class="j" style="left:1091.6px;top:495.5px">[3]</div>
<i class="ja" style="top:520px"></i><div class="j" style="left:1091.6px;top:514.5px">[4]</div>
<i class="ja" style="top:539px"></i><div class="j" style="left:1091.6px;top:533.5px">[5]</div>
<i class="ja" style="top:558px"></i><div class="j" style="left:1091.6px;top:552.5px">[6]</div>
<i class="ja" style="top:577px"></i><div class="j" style="left:1091.6px;top:571.5px">[7]</div>
<i class="ja" style="top:596px"></i><div class="j" style="left:1091.6px;top:590.5px">[8]</div>
<i class="ja" style="top:615px"></i><div class="j" style="left:1091.6px;top:609.5px">[9]</div>
<div class="j" style="left:1072.4px;top:628.5px">Total: 24</div>
<div style="left:1546px;top:726px;width:75px;height:19px;background:#E1E1E1;border:1px solid #7A7A7A;box-sizing:border-box;text-align:center;line-height:18px">Close</div>

<!-- cursor -->
<svg style="left:1129px;top:808px" width="13" height="20"><path d="M.5 .5V16L4 12.5L6.5 18.5L9 17.5L6.5 11.5H11.5Z" fill="#fff" stroke="#222" stroke-width="1"/></svg>
</body></html>
